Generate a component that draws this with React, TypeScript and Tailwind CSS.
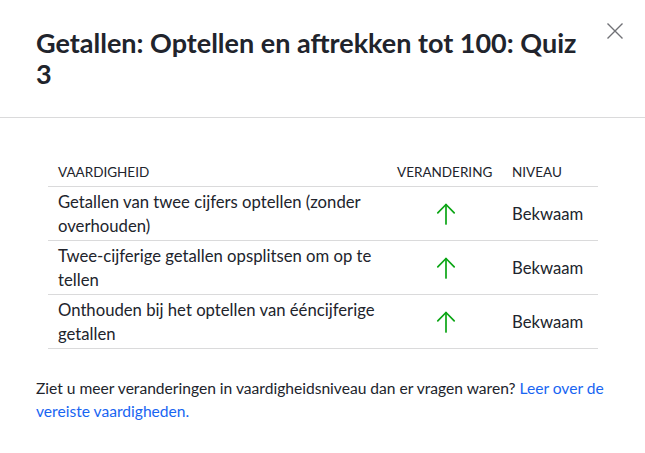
import React from 'react'

const rows = [
  'Getallen van twee cijfers optellen (zonder overhouden)',
  'Twee-cijferige getallen opsplitsen om op te tellen',
  'Onthouden bij het optellen van ééncijferige getallen',
]

function ArrowUp() {
  return (
    <svg width="20" height="22" viewBox="0 0 20 22" fill="none" stroke="#0aa514" strokeWidth="1.7" strokeLinecap="round" strokeLinejoin="round">
      <path d="M10 21V1.5" />
      <path d="M1.8 9.8L10 1.5l8.2 8.3" />
    </svg>
  )
}

export default function App() {
  return (
    <div className="w-[645px] h-[453px] bg-white text-[#21242c] font-['Lato','Noto_Sans',sans-serif] overflow-hidden">
      <div className="flex items-start justify-between pl-[36px] pr-[22px] pt-[27px] pb-[28px] border-b border-[#dadadb]">
        <h1 className="text-[27px] leading-[31px] font-bold w-[550px]">
          Getallen: Optellen en aftrekken tot 100: Quiz 3
        </h1>
        <button className="mt-[-4px] text-[#707176]">
          <svg width="16" height="16" viewBox="0 0 16 16" fill="none" stroke="currentColor" strokeWidth="1.4">
            <path d="M0.5 0.5l15 15M15.5 0.5l-15 15" />
          </svg>
        </button>
      </div>

      <div className="px-[36px] pt-[44px]">
        <table className="mx-[12px] w-[550px] border-collapse table-fixed">
          <thead>
            <tr className="border-b border-[#dadadb] text-left text-[13.5px] uppercase">
              <th className="w-[339px] font-normal pl-[10px] pb-[4px] leading-[20px]">Vaardigheid</th>
              <th className="w-[115px] font-normal pl-[10px] pb-[4px] leading-[20px]">Verandering</th>
              <th className="font-normal pl-[10px] pb-[4px] leading-[20px]">Niveau</th>
            </tr>
          </thead>
          <tbody>
            {rows.map((r) => (
              <tr key={r} className="border-b border-[#dadadb] text-[16.7px] leading-[24px]">
                <td className="pl-[10px] pr-[4px] py-[2.5px]">{r}</td>
                <td className="py-[2.5px]">
                  <div className="flex justify-center pl-[3px]">
                    <ArrowUp />
                  </div>
                </td>
                <td className="pl-[10px] py-[2.5px]">Bekwaam</td>
              </tr>
            ))}
          </tbody>
        </table>

        <p className="mt-[28px] text-[15.6px] leading-[23px]">
          Ziet u meer veranderingen in vaardigheidsniveau dan er vragen waren?{' '}
          <a className="text-[#1865f2]" href="#">Leer over de vereiste vaardigheden.</a>
        </p>
      </div>
    </div>
  )
}
